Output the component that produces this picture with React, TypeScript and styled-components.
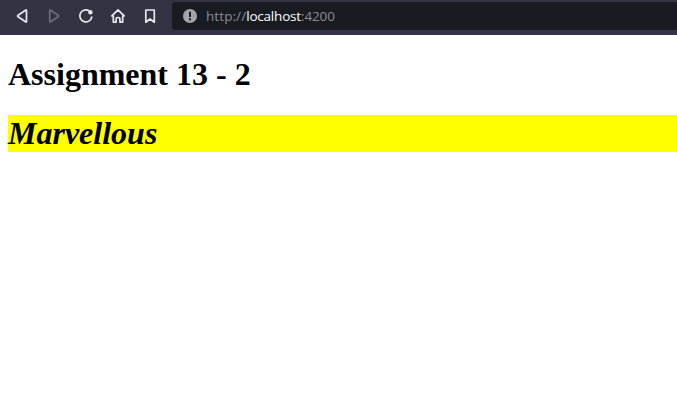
import React from "react";
import styled, { createGlobalStyle } from "styled-components";

const GlobalStyle = createGlobalStyle`
  body { margin: 0; background: #fff; overflow: hidden; }
`;

const Window = styled.div`
  display: flex;
  flex-direction: column;
  height: 100vh;
`;

const Toolbar = styled.header`
  display: flex;
  flex: none;
  box-sizing: border-box;
  height: 35px;
  padding: 2px 0 5px 6px;
  background: #323443;
`;

const NavButtons = styled.nav`
  display: flex;
  flex: none;
  align-items: center;
  margin-right: 6px;
`;

const NavButton = styled.button<{ $dim?: boolean }>`
  width: 32px;
  height: 28px;
  padding: 0;
  border: 0;
  background: none;
  color: ${(p) => (p.$dim ? "#6b6d79" : "#e8e9eb")};
`;

const Icon = styled.svg`
  display: block;
  width: 32px;
  height: 28px;
  fill: none;
  stroke: currentColor;
  stroke-width: 1.7;
  stroke-linecap: round;
  stroke-linejoin: round;
`;

const AddressBar = styled.div`
  display: flex;
  flex: 1;
  align-items: center;
  padding-left: 11px;
  border-radius: 3px 0 0 3px;
  background: #181b22;
`;

const InfoIcon = styled.svg`
  flex: none;
  width: 14px;
  height: 14px;
  margin-right: 9px;
`;

const Address = styled.span`
  color: #8b8d91;
  font: 13.5px/18px "Open Sans", "Noto Sans", sans-serif;
  letter-spacing: -0.1px;
  white-space: nowrap;
`;

const Scheme = styled.span`
  letter-spacing: 0.08px;
`;

const Host = styled.span`
  color: #fff;
  letter-spacing: -0.2px;
`;

const Page = styled.main`
  padding-left: 8px;
  color: #000;
  font-family: "Liberation Serif", "Times New Roman", serif;
`;

const Heading = styled.h1`
  margin: 21.44px 0;
  font-size: 32px;
  line-height: 37px;
  font-weight: bold;
`;

const Highlight = styled(Heading)`
  background: #ff0;
  font-style: italic;
`;

export default function App() {
  return (
    <Window>
      <GlobalStyle />
      <Toolbar>
        <NavButtons>
          <NavButton aria-label="Back">
            <Icon viewBox="0 0 32 28"><path d="M20.5 8.7v10.6q0 1.2-1 .5l-7.4-5q-1-.8 0-1.6l7.4-5q1-.7 1 .5Z" /></Icon>
          </NavButton>
          <NavButton aria-label="Forward" $dim>
            <Icon viewBox="0 0 32 28"><path d="M11.7 8.7v10.6q0 1.2 1 .5l7.4-5q1-.8 0-1.6l-7.4-5q-1-.7-1 .5Z" /></Icon>
          </NavButton>
          <NavButton aria-label="Reload">
            <Icon viewBox="0 0 32 28">
              <path d="M18.6 8.6A6 6 0 1 0 21.7 15.2" />
              <circle cx="20.4" cy="10.3" r="2.2" fill="currentColor" stroke="none" />
            </Icon>
          </NavButton>
          <NavButton aria-label="Home">
            <Icon viewBox="0 0 32 28"><path d="M9.8 13.9 16 7.8l6.2 6.1h-1.5v6.2h-2.8v-3q0-1.6-1.9-1.6t-1.9 1.6v3h-2.8v-6.2Z" /></Icon>
          </NavButton>
          <NavButton aria-label="Bookmark">
            <Icon viewBox="0 0 32 28"><path d="M11.8 8h8.5v12.2L16 17l-4.2 3.2Z" /></Icon>
          </NavButton>
        </NavButtons>
        <AddressBar>
          <InfoIcon viewBox="0 0 14 14">
            <circle cx="7" cy="7" r="7" fill="#a3a5ac" />
            <path d="M6 2.8h2v5.1H6zM6 9.2h2v2H6z" fill="#181b22" />
          </InfoIcon>
          <Address><Scheme>http://</Scheme><Host>localhost</Host>:4200</Address>
        </AddressBar>
      </Toolbar>
      <Page>
        <Heading>Assignment 13 - 2</Heading>
        <Highlight>Marvellous</Highlight>
      </Page>
    </Window>
  );
}
